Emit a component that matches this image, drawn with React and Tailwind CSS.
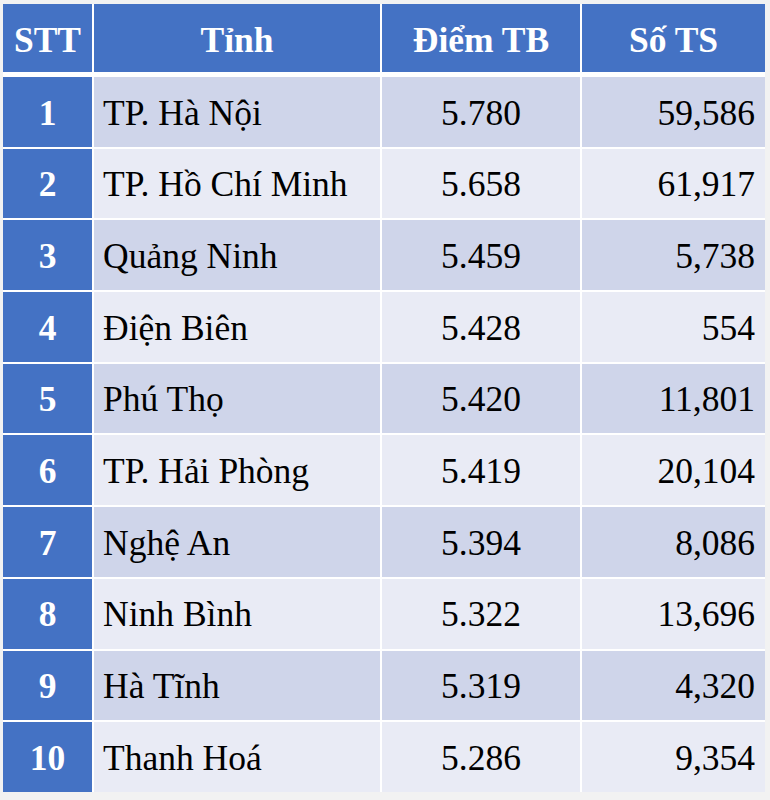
const ROWS = [
  { stt: 1,  tinh: 'TP. Hà Nội',        diem: '5.780', so: '59,586' },
  { stt: 2,  tinh: 'TP. Hồ Chí Minh',   diem: '5.658', so: '61,917' },
  { stt: 3,  tinh: 'Quảng Ninh',        diem: '5.459', so: '5,738' },
  { stt: 4,  tinh: 'Điện Biên',         diem: '5.428', so: '554' },
  { stt: 5,  tinh: 'Phú Thọ',           diem: '5.420', so: '11,801' },
  { stt: 6,  tinh: 'TP. Hải Phòng',     diem: '5.419', so: '20,104' },
  { stt: 7,  tinh: 'Nghệ An',           diem: '5.394', so: '8,086' },
  { stt: 8,  tinh: 'Ninh Bình',         diem: '5.322', so: '13,696' },
  { stt: 9,  tinh: 'Hà Tĩnh',           diem: '5.319', so: '4,320' },
  { stt: 10, tinh: 'Thanh Hoá',         diem: '5.286', so: '9,354' },
]

const COLS = 'grid grid-cols-[89px_286px_198px_183px] gap-x-[2px]'

export default function App() {
  return (
    <div className="w-[770px] h-[800px] bg-[#f2f2f2] pt-[4px] pl-[3px] font-['Liberation_Serif','Times_New_Roman',serif] text-[35.5px] leading-none">
      <div className="w-[762px] bg-white">
        <div className={`${COLS} h-[68px] font-bold text-white`}>
          {['STT', 'Tỉnh', 'Điểm TB', 'Số TS'].map(h => (
            <div key={h} className="bg-[#4472c4] flex items-center justify-center pt-[5px]">{h}</div>
          ))}
        </div>
        <div className="grid grid-rows-[repeat(10,1fr)] h-[720px] gap-y-[2px] pt-[5px]">
          {ROWS.map((r, i) => {
            const bg = i % 2 === 0 ? 'bg-[#cfd5ea]' : 'bg-[#e9ebf5]'
            return (
              <div key={r.stt} className={COLS}>
                <div className="bg-[#4472c4] text-white font-bold flex items-center justify-center pt-[3px]">{r.stt}</div>
                <div className={`${bg} text-black flex items-center pl-[9px] pt-[3px]`}>{r.tinh}</div>
                <div className={`${bg} text-black flex items-center justify-center pt-[3px]`}>{r.diem}</div>
                <div className={`${bg} text-black flex items-center justify-end pr-[10px] pt-[3px]`}>{r.so}</div>
              </div>
            )
          })}
        </div>
      </div>
    </div>
  )
}
